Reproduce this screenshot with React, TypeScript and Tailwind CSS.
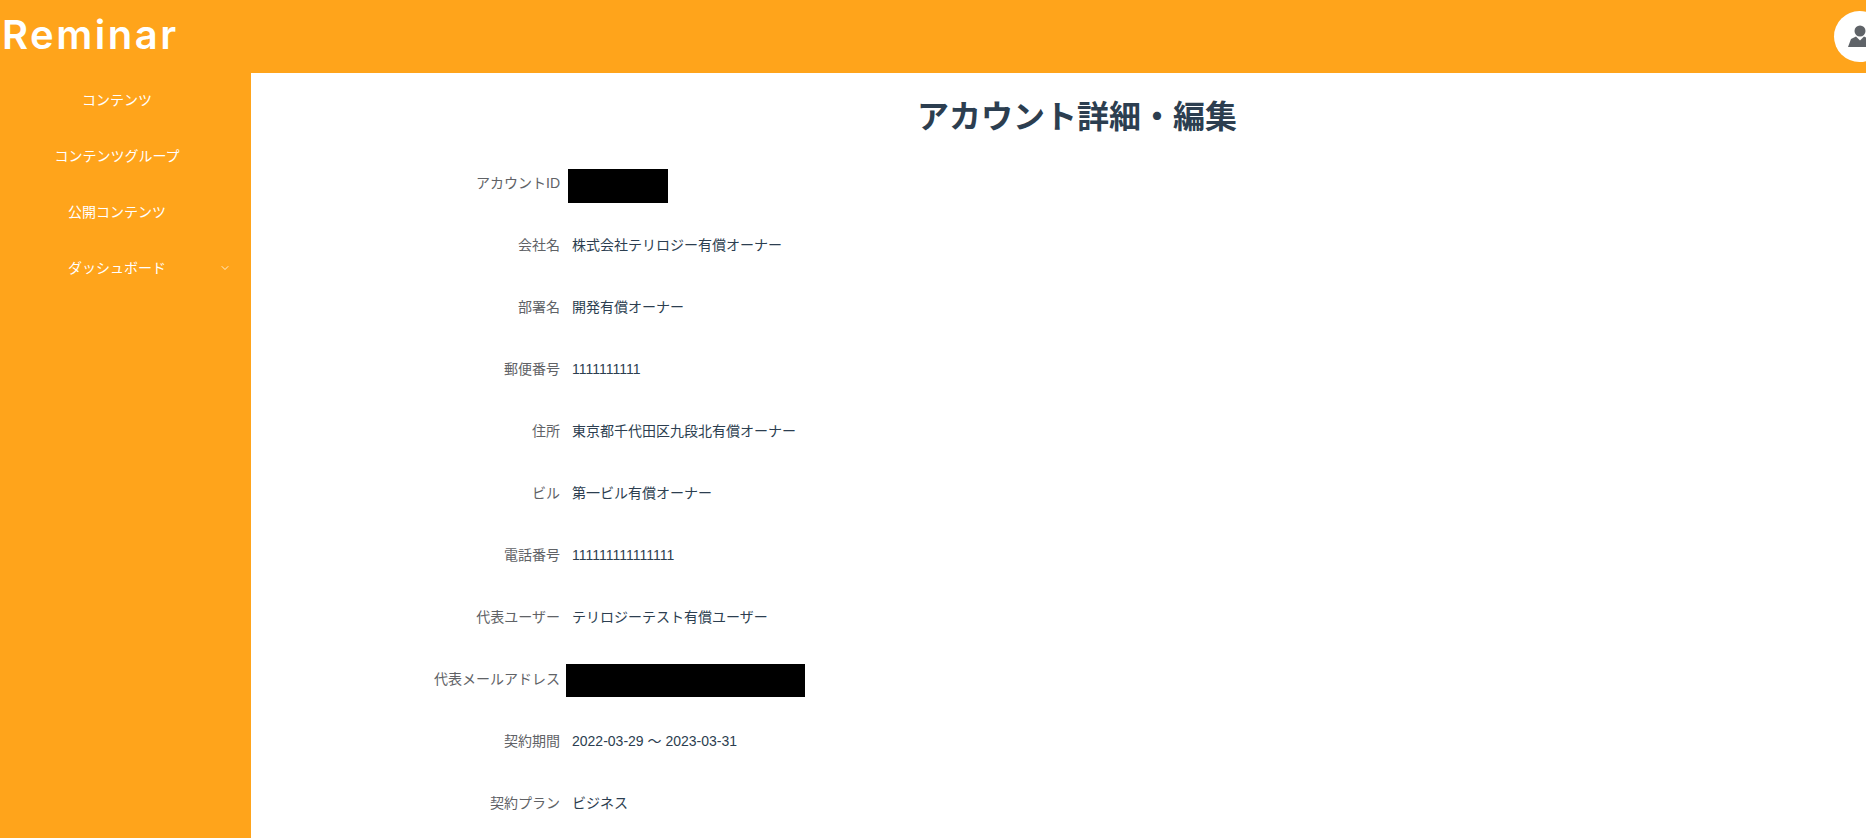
import { ChevronDown } from 'lucide-react'

const rows = [
  { label: 'アカウントID', redacted: 'id' },
  { label: '会社名', value: '株式会社テリロジー有償オーナー' },
  { label: '部署名', value: '開発有償オーナー' },
  { label: '郵便番号', value: '1111111111' },
  { label: '住所', value: '東京都千代田区九段北有償オーナー' },
  { label: 'ビル', value: '第一ビル有償オーナー' },
  { label: '電話番号', value: '111111111111111' },
  { label: '代表ユーザー', value: 'テリロジーテスト有償ユーザー' },
  { label: '代表メールアドレス', redacted: 'mail' },
  { label: '契約期間', value: '2022-03-29 ～ 2023-03-31' },
  { label: '契約プラン', value: 'ビジネス' },
]

const menu = ['コンテンツ', 'コンテンツグループ', '公開コンテンツ']

function UserIcon() {
  return (
    <svg width="26" height="24" viewBox="0 0 26 24" fill="#5f6368">
      <circle cx="13" cy="6" r="5.5" />
      <path d="M1 22 L4 14 L9 11.5 L13 15.5 L17 11.5 L22 14 L25 22 Z" />
    </svg>
  )
}

export default function App() {
  return (
    <div className="h-[838px] w-full overflow-hidden bg-white font-['Liberation_Sans','Noto_Sans_CJK_JP',sans-serif]">
      <div className="w-[1903px]">
        {/* Header */}
        <header className="flex h-[73px] items-center justify-between bg-[#ffa41b] pr-[18px]">
          <span className="mb-1 pl-0.5 font-['Inter',sans-serif] text-[40px] font-semibold leading-none tracking-[2.5px] text-white">
            Reminar
          </span>
          <div className="flex h-[51px] w-[51px] items-center justify-center rounded-full bg-white">
            <UserIcon />
          </div>
        </header>

        <div className="flex h-[765px]">
          {/* Sidebar */}
          <aside className="w-[251px] shrink-0 bg-[#ffa41b] text-sm text-white">
            {menu.map((item) => (
              <div key={item} className="flex h-14 items-center justify-center pb-0.5 pr-[17px]">
                {item}
              </div>
            ))}
            <div className="relative flex h-14 items-center justify-center pb-0.5 pr-[17px]">
              ダッシュボード
              <ChevronDown className="absolute right-5 top-[21px] h-3 w-3" strokeWidth={1.6} />
            </div>
          </aside>

          {/* Account details */}
          <main className="flex-1">
            <h1 className="mb-[22px] mt-[19px] text-center text-[32px] font-bold leading-[50px] text-[#2c3e50]">
              アカウント詳細・編集
            </h1>
            {rows.map((row) => (
              <div key={row.label} className="mb-[22px] flex h-10 items-center text-sm">
                <div className="mb-0.5 w-[309px] text-right text-[#606266]">{row.label}</div>
                {row.redacted === 'id' && <div className="ml-2 mt-1 h-[34px] w-[100px] bg-black" />}
                {row.redacted === 'mail' && <div className="ml-1.5 h-[33px] w-[239px] bg-black" />}
                {row.value && <div className="mb-0.5 ml-3 text-[#2c3e50]">{row.value}</div>}
              </div>
            ))}
          </main>
        </div>
      </div>
    </div>
  )
}
